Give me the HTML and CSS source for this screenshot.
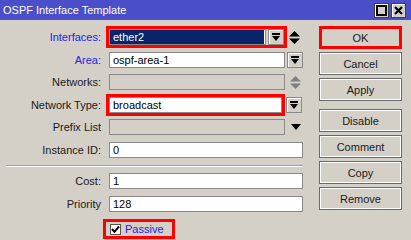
FILE: index.html
```html
<!DOCTYPE html>
<html>
<head>
  <title>OSPF Interface Template</title>
  <link rel="stylesheet" href="styles.css">
</head>
<body>

  <div class="window">
    <div class="titlebar">
      <span class="title">OSPF Interface Template</span>
      <div class="title-buttons">
        <span class="tbtn">
          <svg width="11" height="11" viewBox="0 0 11 11"><rect x="1" y="1" width="9" height="9" fill="none" stroke="#000" stroke-width="2"/></svg>
        </span>
        <span class="tbtn">
          <svg width="11" height="11" viewBox="0 0 11 11"><path d="M2 2 L9 9 M9 2 L2 9" stroke="#000" stroke-width="2.2"/></svg>
        </span>
      </div>
    </div>

    <div class="content">
      <div class="form">
        <div class="row">
          <label class="lbl blue">Interfaces:</label>
          <div class="hl hl-iface">
            <div class="field selected w-iface">ether2</div>
            <span class="dd">
              <svg width="10" height="10" viewBox="0 0 10 10"><rect x="1" y="1" width="8" height="2" fill="#000"/><path d="M1 4 H9 L5 9 Z" fill="#000"/></svg>
            </span>
          </div>
          <span class="updown">
            <svg width="11" height="13" viewBox="0 0 11 13"><path d="M0 5.5 H11 L5.5 0 Z M0 7.5 H11 L5.5 13 Z" fill="#000"/></svg>
          </span>
        </div>

        <div class="row">
          <label class="lbl blue">Area:</label>
          <div class="field w-mid">ospf-area-1</div>
          <span class="dd dd-gap">
            <svg width="10" height="10" viewBox="0 0 10 10"><rect x="1" y="1" width="8" height="2" fill="#000"/><path d="M1 4 H9 L5 9 Z" fill="#000"/></svg>
          </span>
        </div>

        <div class="row">
          <label class="lbl">Networks:</label>
          <div class="field disabled w-mid"></div>
          <span class="updown">
            <svg width="11" height="13" viewBox="0 0 11 13"><path d="M0 5.5 H11 L5.5 0 Z M0 7.5 H11 L5.5 13 Z" fill="#808080"/></svg>
          </span>
        </div>

        <div class="row">
          <label class="lbl">Network Type:</label>
          <div class="hl">
            <div class="field w-type">broadcast</div>
          </div>
          <span class="dd dd-gap2">
            <svg width="10" height="10" viewBox="0 0 10 10"><rect x="1" y="1" width="8" height="2" fill="#000"/><path d="M1 4 H9 L5 9 Z" fill="#000"/></svg>
          </span>
        </div>

        <div class="row">
          <label class="lbl">Prefix List</label>
          <div class="field disabled w-mid"></div>
          <span class="arrow">
            <svg width="10" height="6" viewBox="0 0 10 6"><path d="M0 0 H10 L5 6 Z" fill="#000"/></svg>
          </span>
        </div>

        <div class="row">
          <label class="lbl">Instance ID:</label>
          <div class="field w-full">0</div>
        </div>

        <div class="separator"></div>

        <div class="row">
          <label class="lbl">Cost:</label>
          <div class="field w-full">1</div>
        </div>

        <div class="row">
          <label class="lbl">Priority</label>
          <div class="field w-full">128</div>
        </div>

        <div class="row passive-row">
          <span class="lbl"></span>
          <div class="hl passive">
            <span class="checkbox">
              <svg width="9" height="9" viewBox="0 0 9 9"><path d="M1 4 L3.5 6.8 L8 1.5" fill="none" stroke="#000" stroke-width="2"/></svg>
            </span>
            <span class="blue">Passive</span>
          </div>
        </div>
      </div>

      <div class="actions">
        <button class="btn btn-hl">OK</button>
        <button class="btn">Cancel</button>
        <button class="btn">Apply</button>
        <button class="btn btn-space">Disable</button>
        <button class="btn">Comment</button>
        <button class="btn">Copy</button>
        <button class="btn">Remove</button>
      </div>
    </div>
  </div>

</body>
</html>
```

FILE: styles.css
```css
body {
  margin: 0;
  font-family: "Liberation Sans", Arial, sans-serif;
  font-size: 11px;
  color: #1a1a1a;
  background-color: #d4d0c8;
}

.window {
  width: 411px;
  height: 240px;
  background-color: #d4d0c8;
  overflow: hidden;
}

.titlebar {
  height: 20px;
  background-color: #4a4ec8;
  display: flex;
  align-items: center;
  justify-content: space-between;
  padding: 0 5px 0 3px;
  box-sizing: border-box;
}

.title {
  color: #fff;
}

.title-buttons {
  display: flex;
  gap: 2px;
}

.tbtn {
  width: 15px;
  height: 15px;
  box-sizing: border-box;
  background-color: #d4d0c8;
  border: 1px solid #404040;
  box-shadow: inset 1px 1px #fff;
  display: flex;
  align-items: center;
  justify-content: center;
}

.content {
  display: flex;
}

.form {
  width: 313px;
  padding: 9px 0 0 6px;
  box-sizing: border-box;
  display: flex;
  flex-direction: column;
  gap: 6.6px;
}

.row {
  display: flex;
  align-items: center;
  gap: 8px;
  height: 16px;
}

.lbl {
  width: 95px;
  text-align: right;
  flex-shrink: 0;
}

.blue {
  color: #2323e8;
}

.field {
  height: 16px;
  box-sizing: border-box;
  border: 1px solid #8a8a8a;
  background-color: #fff;
  padding: 0 3px;
  line-height: 14px;
  color: #000;
}

.field.disabled {
  background-color: #d4d0c8;
}

.field.selected {
  background-color: #0a246a;
  color: #fff;
  box-shadow: inset -1px 0 #fff;
}

.w-iface { width: 157px; }
.w-mid { width: 176px; }
.w-type { width: 173px; }
.w-full { width: 194px; }

.hl {
  display: flex;
  align-items: center;
  gap: 2px;
  outline: 3px solid #f00;
}

.dd {
  width: 16px;
  height: 16px;
  box-sizing: border-box;
  border: 1px solid #8a8a8a;
  box-shadow: inset 1px 1px #fff;
  background-color: #d4d0c8;
  display: flex;
  align-items: center;
  justify-content: center;
}

.dd-gap {
  margin-left: -6px;
}

.dd-gap2 {
  margin-left: -4px;
}

.updown {
  display: flex;
  margin-left: -3px;
}

.arrow {
  display: flex;
  margin-left: -2px;
}

.separator {
  width: 297px;
  border-top: 1px solid #a0a0a0;
  border-bottom: 1px solid #fff;
  margin: 0;
}

.passive-row {
  margin-top: 3px;
}

.passive {
  height: 14px;
  margin-left: -3px;
  padding: 0 8px 0 4px;
  gap: 4px;
}

.checkbox {
  width: 11px;
  height: 11px;
  box-sizing: border-box;
  border: 1px solid #555;
  background-color: #fff;
  display: flex;
  align-items: center;
  justify-content: center;
}

.actions {
  display: flex;
  flex-direction: column;
  gap: 3px;
  padding-top: 6px;
  margin-left: 6px;
}

.btn {
  width: 83px;
  height: 23px;
  box-sizing: border-box;
  font-family: "Liberation Sans", Arial, sans-serif;
  font-size: 11px;
  color: #1a1a1a;
  background-color: #d4d0c8;
  border: 1px solid #6a6a6a;
  box-shadow: inset 0 0 0 1px #fff;
  padding: 0;
}

.btn-hl {
  border: 3px solid #f00;
  box-shadow: none;
}

.btn-space {
  margin-top: 5px;
}
```
